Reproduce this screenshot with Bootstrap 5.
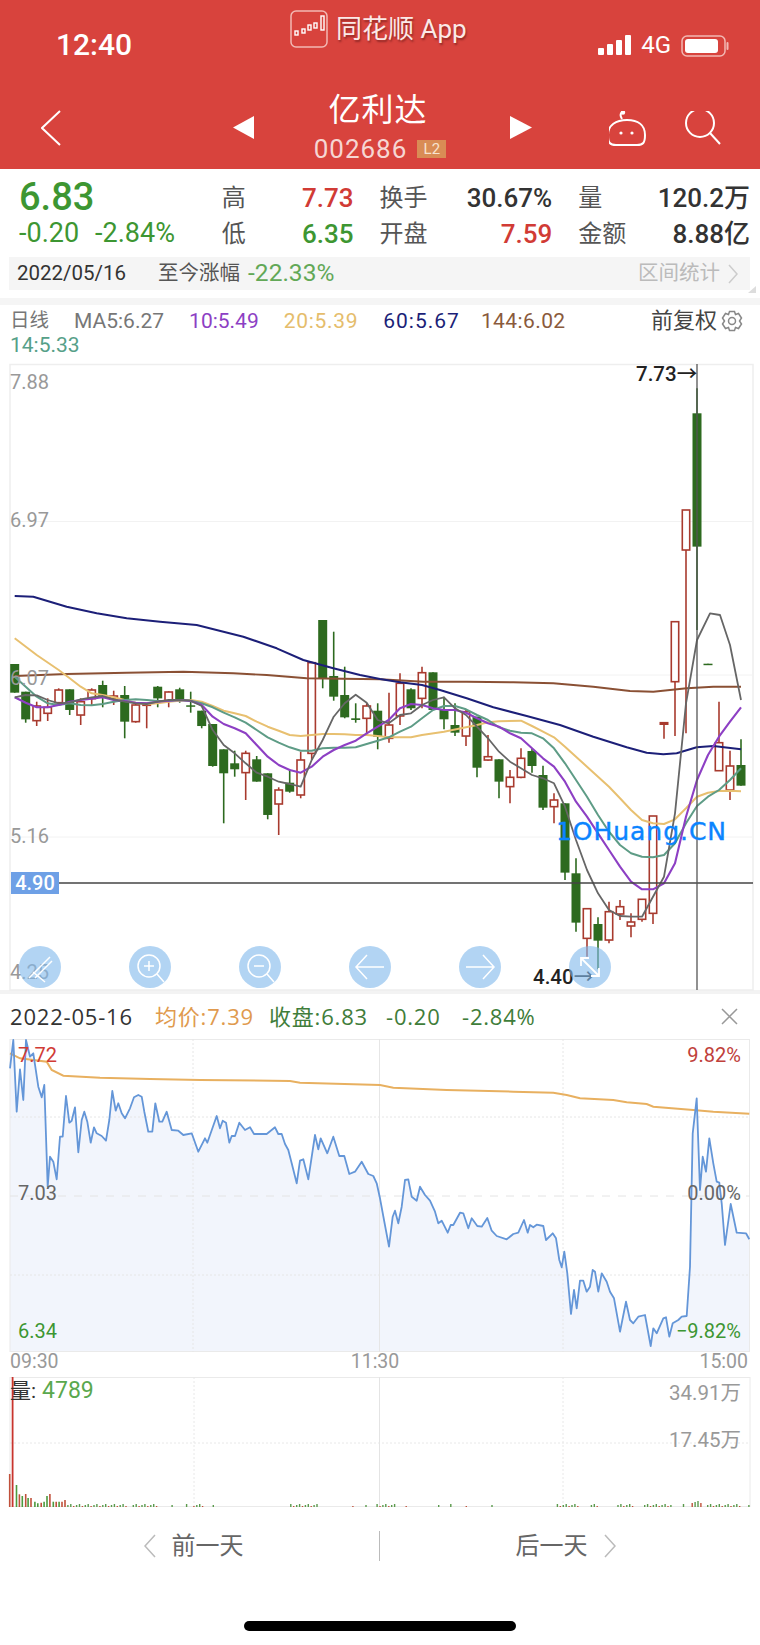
<!DOCTYPE html>
<html lang="zh">
<head>
    <title>亿利达 002686</title>
    <meta name="viewport" content="width=device-width, initial-scale=1.0">
    <link href="https://cdn.jsdelivr.net/npm/bootstrap@5.3.0/dist/css/bootstrap.min.css" rel="stylesheet">
    <style>
        body {
            width: 760px;
            height: 1645px;
            overflow: hidden;
            background: #fff;
            color: #333;
            font-family: Roboto, "Noto Sans CJK SC", sans-serif;
        }
        svg { display: block; }
        #klineSvg { overflow: visible; }
        .hq-top { height: 169px; background: #d8433d; color: #fff; }
        .status-row { height: 70px; padding: 10px 31px 0 56px; }
        .status-time { font-size: 30px; font-weight: 500; width: 234px; padding-top: 20px; line-height: 30px; }
        .status-app { font-size: 26px; line-height: 38px; text-shadow: 1px 2px 2px rgba(90,20,20,.55); color: #fbe9e7; }
        .status-net { margin-left: auto; padding-top: 25px; font-size: 24px; line-height: 20px; gap: 10px; }
        .title-row { height: 99px; padding: 21px 38px 0 41px; }
        .back-ico { margin-top: 19px; }
        .side-ico { margin-top: 20px; }
        .stock-name { font-size: 32px; line-height: 38px; letter-spacing: 1px; margin-bottom: 5px; }
        .stock-code { font-size: 26px; line-height: 30px; color: #f6d6d3; letter-spacing: 1px; }
        .l2-tag { background: #d98c55; color: #f8e3cf; font-size: 15px; line-height: 18px; width: 29px; text-align: center; margin-left: 10px; }
        .title-mid { width: 299px; margin-left: 172px; }
        .info-box { height: 88px; padding: 8px 10px 0 19px; gap: 26px; }
        .info-left { width: 177px; }
        .last-price { font-size: 38px; line-height: 40px; color: #3d9632; font-weight: 500; }
        .last-chg { font-size: 27px; line-height: 32px; color: #3d9632; gap: 16px; white-space: nowrap; }
        .info-cell { font-size: 24px; line-height: 36px; padding-top: 3px; }
        .cell-a { width: 132px; }
        .cell-b { width: 173px; }
        .cell-c { width: 172px; }
        .lab-cn { color: #555; }
        .val-num { font-size: 26px; font-weight: 500; }
        .c-up { color: #d13b35; }
        .c-down { color: #3d9632; }
        .date-bar { position: relative; height: 33px; margin: 0 10px 0 9px; padding: 0 12px 0 8px; background: #f5f5f5; font-size: 20.5px; }
        .date-bar::after { content: ""; position: absolute; right: -6px; bottom: -3px; border-style: solid; border-width: 0 0 7px 8px; border-color: transparent transparent #ddd transparent; }
        .date-up { color: #62a857; font-size: 24.5px; }
        .date-more { color: #bbb; }
        .band-gap { height: 8px; }
        .band-grey { height: 7px; background: #f5f5f5; }
        .band-thin { height: 4px; background: #f3f3f3; }
        .legend-box { height: 59px; padding: 4px 17px 0 10px; font-size: 21px; line-height: 24px; position: relative; }
        .legend-line { gap: 25px; white-space: nowrap; }
        .leg-day { font-size: 19.5px; }
        .leg-fq { font-size: 22px; color: #444; }
        .m-gray { color: #777; }
        .m-pur { color: #8d3fc4; }
        .m-yel { color: #e5bd6c; letter-spacing: .7px; }
        .m-navy { color: #1c1f78; letter-spacing: 1px; }
        .m-brn { color: #8a5a3c; letter-spacing: .4px; margin-left: -4px; }
        .m-teal { color: #56a088; }
        .kline-box { position: relative; height: 626px; }
        .tool-row { position: absolute; left: 19px; top: 582px; gap: 68px; }
        .tool-btn { width: 42px; height: 42px; border-radius: 50%; background: rgba(130,185,235,.62); border: 0; padding: 0; }
        .day-head { height: 45px; padding: 0 22px 0 10px; font-size: 22px; letter-spacing: .8px; white-space: nowrap; display: grid; grid-template-columns: 145px 114px 117px 76px 1fr auto; align-items: center; font-family: "Open Sans", Roboto, "Noto Sans CJK SC", sans-serif; }
        .c-avg { color: #e09a4e; }
        .c-close { color: #3f7d3a; }
        .ax-txt { font-size: 20px; fill: #999; }
        .time-axis { height: 25px; padding: 0 12px 0 10px; font-size: 19.5px; line-height: 19px; color: #999; }
        .nav-box { height: 93px; font-size: 24px; color: #666; padding-top: 0; }
        .nav-half { width: 379px; height: 30px; }
        .nav-sep { width: 1px; height: 30px; background: #bbb; }
        .home-bar { width: 272px; height: 10px; background: #000; border-radius: 5px; margin: 21px auto 0; }
    </style>
</head>
<body>
    <!-- 顶部红色栏 -->
    <div class="hq-top">
        <div class="status-row d-flex">
            <div class="status-time">12:40</div>
            <div class="d-flex gap-2 align-items-start">
                <svg width="38" height="38" viewBox="0 0 38 38">
                    <rect x="1" y="1" width="36" height="36" rx="5" fill="#d8433d" stroke="#f2b8b3" stroke-width="1.5"/>
                    <g fill="none" stroke="#fff" stroke-width="1.4">
                        <rect x="5" y="21" width="3" height="4"/><rect x="12" y="19" width="3" height="4"/>
                        <rect x="18" y="15" width="3" height="5"/><rect x="24" y="13" width="3" height="5"/><rect x="31" y="6" width="3" height="14"/>
                    </g>
                </svg>
                <span class="status-app">同花顺 App</span>
            </div>
            <div class="status-net d-flex">
                <svg width="33" height="20" viewBox="0 0 33 20" fill="#fff">
                    <rect x="0" y="13" width="6" height="7" rx="1"/><rect x="9" y="9" width="6" height="11" rx="1"/>
                    <rect x="18" y="5" width="6" height="15" rx="1"/><rect x="27" y="0" width="6" height="20" rx="1"/>
                </svg>
                <span>4G</span>
                <svg width="48" height="22" viewBox="0 0 48 22">
                    <rect x="1" y="1" width="43" height="20" rx="5" fill="none" stroke="#f2b8b3" stroke-width="1.5"/>
                    <rect x="4" y="4" width="33" height="14" rx="3" fill="#fff"/>
                    <rect x="45.5" y="7" width="2" height="8" rx="1" fill="#f2b8b3"/>
                </svg>
            </div>
        </div>
        <div class="title-row d-flex align-items-start">
            <svg class="back-ico" width="20" height="36" viewBox="0 0 20 36"><polyline points="19,1 1,18 19,35" fill="none" stroke="#fff" stroke-width="2"/></svg>
            <div class="title-mid d-flex justify-content-between align-items-center">
                <svg width="21" height="23" viewBox="0 0 21 23"><polygon points="21,0 21,23 0,11.5" fill="#fff"/></svg>
                <div class="text-center pe-2">
                    <div class="stock-name">亿利达</div>
                    <div class="d-flex align-items-center justify-content-center ms-1">
                        <span class="stock-code">002686</span><span class="l2-tag">L2</span>
                    </div>
                </div>
                <svg width="22" height="23" viewBox="0 0 22 23"><polygon points="0,0 0,23 22,11.5" fill="#fff"/></svg>
            </div>
            <svg class="ms-auto side-ico" width="113" height="38" viewBox="0 0 113 38" fill="none" stroke="#fff" stroke-width="2">
                <g transform="translate(-2,0)">
                    <path d="M15 8 C 13 5 13 3 15 1"/><circle cx="16" cy="1.5" r="1.2" fill="#fff"/>
                    <path d="M1 24 C 1 14 9 9 20 9 C 31 9 38 14 38 24 C 38 32 36 34 30 34 L 9 34 C 3 34 1 32 1 24 Z"/>
                    <circle cx="14" cy="22" r="1.6" fill="#fff" stroke="none"/><circle cx="25" cy="22" r="1.6" fill="#fff" stroke="none"/>
                </g>
                <circle cx="91" cy="12" r="14"/><line x1="101" y1="22" x2="111" y2="33"/>
            </svg>
        </div>
    </div>

    <!-- 行情概要 -->
    <div class="info-box d-flex">
        <div class="info-left">
            <div class="last-price">6.83</div>
            <div class="last-chg d-flex"><span>-0.20</span><span>-2.84%</span></div>
        </div>
        <div class="info-cell cell-a">
            <div class="d-flex justify-content-between"><span class="lab-cn">高</span><span class="val-num c-up">7.73</span></div>
            <div class="d-flex justify-content-between"><span class="lab-cn">低</span><span class="val-num c-down">6.35</span></div>
        </div>
        <div class="info-cell cell-b">
            <div class="d-flex justify-content-between"><span class="lab-cn">换手</span><span class="val-num">30.67%</span></div>
            <div class="d-flex justify-content-between"><span class="lab-cn">开盘</span><span class="val-num c-up">7.59</span></div>
        </div>
        <div class="info-cell cell-c">
            <div class="d-flex justify-content-between"><span class="lab-cn">量</span><span class="val-num">120.2万</span></div>
            <div class="d-flex justify-content-between"><span class="lab-cn">金额</span><span class="val-num">8.88亿</span></div>
        </div>
    </div>
    <div class="date-bar d-flex align-items-center">
        <span>2022/05/16</span>
        <span class="lab-cn ms-4 ps-2">至今涨幅</span>
        <span class="date-up ms-2">-22.33%</span>
        <span class="date-more ms-auto">区间统计</span>
        <svg class="ms-2" width="10" height="20" viewBox="0 0 10 20"><polyline points="1,1 9,10 1,19" fill="none" stroke="#ccc" stroke-width="1.5"/></svg>
    </div>
    <div class="band-gap"></div>
    <div class="band-grey"></div>

    <!-- 均线图例 -->
    <div class="legend-box">
        <div class="legend-line d-flex">
            <span class="m-gray leg-day">日线</span>
            <span class="m-gray">MA5:6.27</span>
            <span class="m-pur">10:5.49</span>
            <span class="m-yel">20:5.39</span>
            <span class="m-navy">60:5.67</span>
            <span class="m-brn">144:6.02</span>
            <span class="leg-fq ms-auto d-flex align-items-center gap-1">前复权
                <svg width="22" height="22" viewBox="0 0 22 22" fill="none" stroke="#888" stroke-width="1.5">
                    <path d="M8.5 1.5 H13.5 L14.5 4.5 L17.5 3.5 L20.5 8 L18.5 11 L20.5 14 L17.5 18.5 L14.5 17.5 L13.5 20.5 H8.5 L7.5 17.5 L4.5 18.5 L1.5 14 L3.5 11 L1.5 8 L4.5 3.5 L7.5 4.5 Z"/>
                    <circle cx="11" cy="11" r="3.5"/>
                </svg>
            </span>
        </div>
        <div class="m-teal">14:5.33</div>
    </div>

    <!-- K线图 -->
    <div class="kline-box">
        <svg id="klineSvg" width="760" height="626" viewBox="0 364 760 626"></svg>
        <div class="tool-row d-flex">
            <button class="tool-btn" type="button" aria-label="收起">
                <svg width="42" height="42" viewBox="0 0 42 42" fill="none" stroke="#fff" stroke-width="1.5"><path d="M10 32 L31 11 M16 32 L33 15 M14 26 L26 36"/></svg>
            </button>
            <button class="tool-btn" type="button" aria-label="放大">
                <svg width="42" height="42" viewBox="0 0 42 42" fill="none" stroke="#fff" stroke-width="1.5"><circle cx="20" cy="20" r="11"/><path d="M28 28 L35 36 M15 20 H25 M20 15 V25"/></svg>
            </button>
            <button class="tool-btn" type="button" aria-label="缩小">
                <svg width="42" height="42" viewBox="0 0 42 42" fill="none" stroke="#fff" stroke-width="1.5"><circle cx="20" cy="20" r="11"/><path d="M28 28 L35 36 M15 20 H25"/></svg>
            </button>
            <button class="tool-btn" type="button" aria-label="左移">
                <svg width="42" height="42" viewBox="0 0 42 42" fill="none" stroke="#fff" stroke-width="1.5"><path d="M7 21 H35 M18 9 L7 21 L18 33"/></svg>
            </button>
            <button class="tool-btn" type="button" aria-label="右移">
                <svg width="42" height="42" viewBox="0 0 42 42" fill="none" stroke="#fff" stroke-width="1.5"><path d="M7 21 H35 M24 9 L35 21 L24 33"/></svg>
            </button>
            <button class="tool-btn" type="button" aria-label="全屏">
                <svg width="42" height="42" viewBox="0 0 42 42" fill="none" stroke="#fff" stroke-width="1.8"><path d="M12 12 L30 30 M12 20 V12 H20 M30 22 V30 H22"/></svg>
            </button>
        </div>
    </div>
    <div class="band-thin"></div>

    <!-- 当日分时 -->
    <div class="day-head">
        <span>2022-05-16</span>
        <span class="c-avg">均价:7.39</span>
        <span class="c-close">收盘:6.83</span>
        <span class="c-close">-0.20</span>
        <span class="c-close">-2.84%</span>
        <svg width="17" height="17" viewBox="0 0 17 17"><path d="M1 1 L16 16 M16 1 L1 16" stroke="#999" stroke-width="1.5"/></svg>
    </div>
    <svg id="minuteSvg" width="760" height="313" viewBox="0 1039 760 313"></svg>
    <div class="time-axis d-flex justify-content-between">
        <span>09:30</span><span class="me-2">11:30</span><span>15:00</span>
    </div>
    <svg id="volumeSvg" width="760" height="130" viewBox="0 1377 760 130"></svg>

    <!-- 前后一天 -->
    <div class="nav-box">
        <div class="d-flex align-items-center pt-4">
            <div class="nav-half d-flex align-items-center justify-content-center gap-3 ps-2">
                <svg width="12" height="24" viewBox="0 0 12 24"><polyline points="11,1 1,12 11,23" fill="none" stroke="#bbb" stroke-width="1.5"/></svg>
                <span>前一天</span>
            </div>
            <div class="nav-sep"></div>
            <div class="nav-half d-flex align-items-center justify-content-center gap-3 pe-2">
                <span>后一天</span>
                <svg width="12" height="24" viewBox="0 0 12 24"><polyline points="1,1 11,12 1,23" fill="none" stroke="#bbb" stroke-width="1.5"/></svg>
            </div>
        </div>
    </div>
    <div class="home-bar"></div>

    <script src="https://cdn.jsdelivr.net/npm/bootstrap@5.3.0/dist/js/bootstrap.bundle.min.js"></script>
    <script>
        // 读图坐标：3 倍放大后的位置，fx/fy 换算回页面坐标
        const fx = x => (x / 3).toFixed(1);
        const fy = y => (620 + y / 3).toFixed(1);
        const poly = (pts, color, w) => `<polyline fill="none" stroke="${color}" stroke-width="${w}" stroke-linejoin="round" points="${pts.map(p => fx(p[0]) + ',' + fy(p[1])).join(' ')}"/>`;
        const shift = arr => arr.map(p => [p[0] + 1140, p[1]]);

        // [x, 实体上, 实体下, 影线上, 影线下, 涨跌]
        const candles = [
            [44,132,218,132,218,'g'],[77,215,298,215,308,'g'],[110,258,302,245,318,'r'],[143,262,280,235,303,'r'],
            [176,210,248,205,250,'r'],[209,208,270,208,285,'g'],[242,245,285,235,315,'r'],[275,210,236,205,255,'r'],
            [308,195,232,182,262,'g'],[341,228,236,212,255,'r'],[374,225,305,198,355,'g'],[407,255,305,250,308,'r'],
            [440,250,256,250,325,'r'],[473,200,235,198,262,'g'],[506,216,242,214,262,'r'],[539,208,242,203,248,'g'],
            [572,256,260,215,278,'g'],[605,272,318,272,325,'g'],[638,312,438,312,440,'g'],[671,388,460,388,610,'g'],
            [704,430,448,392,470,'g'],[737,400,458,392,540,'r'],[770,418,485,408,485,'g'],[803,460,585,460,598,'g'],
            [836,510,552,502,645,'r'],[869,488,515,448,518,'g'],[902,420,525,395,535,'r'],[935,128,400,125,420,'r'],
            [968,0,175,0,205,'g'],[1001,168,230,35,242,'g'],[1034,225,292,140,295,'g'],[1067,295,300,250,308,'g'],
            [1100,258,295,250,345,'r'],[1133,272,350,250,388,'g']
        ];
        const candlesRight = [
            [27,315,355,218,368,'r'],[60,190,288,160,315,'r'],[93,208,265,205,270,'g'],[126,158,235,140,265,'r'],
            [159,157,270,157,270,'g'],[192,268,298,230,328,'g'],[225,315,338,250,348,'g'],[258,275,348,270,378,'r'],
            [291,290,443,290,472,'g'],[324,410,420,345,422,'r'],[357,418,485,418,535,'g'],[390,472,500,450,550,'r'],
            [423,415,472,385,475,'r'],[456,393,438,385,458,'g'],[489,465,563,437,570,'g'],[522,540,560,520,610,'r'],
            [555,550,758,550,780,'g'],[588,760,908,715,935,'g'],[621,866,955,866,1010,'r'],[654,912,962,892,1048,'g'],
            [687,875,960,845,970,'r'],[720,860,882,840,900,'r'],[753,906,918,880,952,'r'],[786,838,898,838,905,'r'],
            [819,588,880,588,912,'r'],[852,308,312,308,356,'r'],[885,5,185,5,348,'r'],[918,-330,-210,-330,340,'r'],
            [951,-620,-220,-695,30,'g'],[984,131,135,131,135,'g'],[1017,368,452,245,452,'r'],[1050,438,510,392,540,'r'],
            [1083,435,497,358,497,'g']
        ].map(c => [c[0] + 1140, ...c.slice(1)]);

        const ma5 = [[44,232],[77,225],[110,226],[143,240],[176,250],[209,248],[242,238],[275,232],[308,228],[341,238],[374,245],[407,250],[440,252],[473,245],[506,240],[539,240],[572,242],[605,258],[638,330],[671,375],[704,400],[737,430],[770,458],[803,470],[836,485],[869,492],[902,500],[935,420],[968,360],[1001,290],[1034,250],[1067,224],[1100,248],[1133,300]]
            .concat(shift([[26,310],[60,285],[93,280],[126,255],[159,240],[192,232],[225,265],[258,285],[291,320],[324,355],[357,395],[390,425],[423,445],[456,465],[489,475],[522,490],[555,560],[588,660],[621,750],[654,820],[687,870],[720,888],[753,890],[786,890],[819,830],[852,770],[885,580],[918,250],[951,60],[990,-20],[1020,-15],[1050,75],[1083,240]]));
        const ma10 = [[44,232],[77,248],[110,262],[143,262],[176,255],[209,245],[242,240],[275,236],[308,232],[341,240],[374,243],[407,248],[440,250],[473,245],[506,242],[539,240],[572,243],[605,255],[638,290],[671,312],[704,325],[737,340],[770,375],[803,410],[836,435],[869,450],[902,458],[935,440],[968,410],[1001,390],[1034,375],[1067,362],[1100,340],[1133,320]]
            .concat(shift([[26,300],[60,265],[93,252],[126,255],[159,265],[192,270],[225,270],[258,278],[291,295],[324,310],[357,320],[390,340],[423,355],[456,385],[489,415],[522,440],[555,485],[588,545],[621,590],[654,640],[687,690],[720,740],[753,785],[786,808],[819,808],[852,790],[885,730],[918,590],[951,480],[984,405],[1017,350],[1050,305],[1083,262]]));
        const ma14 = [[44,170],[77,200],[110,230],[143,250],[176,255],[209,250],[242,255],[275,256],[308,252],[341,245],[374,240],[407,238],[440,240],[473,243],[506,243],[539,240],[572,242],[605,250],[638,262],[671,278],[704,292],[737,308],[770,330],[803,352],[836,368],[869,382],[902,392],[935,392],[968,385],[1001,383],[1034,383],[1067,382],[1100,372],[1133,362]]
            .concat(shift([[26,352],[60,335],[93,320],[126,295],[159,270],[192,258],[225,258],[258,268],[291,285],[324,300],[357,322],[390,332],[423,338],[456,340],[489,355],[522,385],[555,430],[588,480],[621,530],[654,585],[687,635],[720,675],[753,700],[786,710],[819,712],[852,705],[885,670],[918,610],[951,558],[984,530],[1017,510],[1050,480],[1083,445]]));
        const ma20 = [[44,55],[110,105],[176,150],[209,175],[242,200],[275,220],[308,225],[341,232],[374,240],[407,248],[440,253],[473,250],[506,245],[539,242],[572,240],[605,245],[638,258],[671,272],[704,280],[737,288],[770,305],[803,320],[836,332],[869,345],[902,348],[935,345],[968,342],[1001,342],[1034,343],[1067,345],[1100,345],[1133,348]]
            .concat(shift([[26,352],[93,352],[126,345],[192,335],[258,322],[291,315],[324,307],[357,304],[423,302],[456,318],[489,335],[522,352],[555,380],[588,410],[621,440],[654,470],[687,500],[720,535],[753,570],[786,600],[819,610],[852,612],[885,598],[918,565],[951,530],[984,518],[1017,513],[1050,512],[1083,514]]));
        const ma60 = [[44,-72],[100,-70],[200,-40],[290,-20],[380,-5],[480,5],[590,15],[730,50],[830,85],[910,120],[1000,145],[1080,165]]
            .concat(shift([[0,177],[60,187],[126,195],[180,210],[260,235],[340,262],[440,288],[540,315],[640,350],[740,382],[800,398],[850,403],[890,400],[950,382],[1000,378],[1083,388]]));
        const ma144 = [[44,168],[200,162],[380,158],[550,155],[700,160],[800,165],[920,175]]
            .concat(shift([[0,178],[130,185],[260,185],[400,187],[520,190],[640,200],[750,213],[820,215],[920,205],[1000,200],[1083,200]]));

        let k = '';
        k += '<rect x="10" y="364.5" width="743" height="625.5" fill="none" stroke="#eee" stroke-width="1.5"/>';
        [521.5, 675, 837].forEach(y => { k += `<line x1="10" x2="753" y1="${y}" y2="${y}" stroke="#f2f2f2"/>`; });
        candles.concat(candlesRight).forEach(c => {
            const x = +fx(c[0]), col = c[5] === 'r' ? '#a83a2e' : '#2d6a1f';
            k += `<line x1="${x}" x2="${x}" y1="${fy(c[3])}" y2="${fy(c[4])}" stroke="${col}" stroke-width="1.6"/>`;
            const top = +fy(c[1]), h = Math.max((c[2] - c[1]) / 3, 1.5);
            k += c[5] === 'r'
                ? `<rect x="${x - 3.7}" y="${top}" width="7.4" height="${h}" fill="#fff" stroke="${col}" stroke-width="1.6"/>`
                : `<rect x="${x - 4.5}" y="${top}" width="9" height="${h}" fill="${col}"/>`;
        });
        k += poly(ma144, '#8a5034', 1.9) + poly(ma60, '#1c1f78', 2) + poly(ma20, '#e8c070', 2);
        k += poly(ma14, '#5e9c86', 2) + poly(ma10, '#8d3fc4', 2.1) + poly(ma5, '#666', 1.8);
        k += '<line x1="59" x2="753" y1="883" y2="883" stroke="#444" stroke-width="1.3"/><line x1="697" x2="697" y1="364" y2="990" stroke="#555" stroke-width="1.3"/>';
        k += '<rect x="11" y="872" width="48" height="22" fill="#6ea0e6"/><text x="35" y="890" text-anchor="middle" fill="#fff" font-size="20" font-weight="500">4.90</text>';
        [['7.88', 389], ['6.97', 527], ['6.07', 685], ['5.16', 843], ['4.25', 979]].forEach(t => {
            k += `<text class="ax-txt" x="10" y="${t[1]}">${t[0]}</text>`;
        });
        k += '<text x="636" y="381" font-size="20.5" font-weight="500" fill="#222">7.73→</text><text x="533" y="984" font-size="20.5" font-weight="500" fill="#222">4.40→</text>';
        k += '<text x="556" y="840" font-size="25" fill="#0a84ff" stroke="#0a84ff" stroke-width=".4" font-family="DejaVu Sans" textLength="170">1OHuang.CN</text>';
        document.getElementById('klineSvg').innerHTML = k;

        // 分时图：坐标同样取自放大图
        const mx = x => (x / 3).toFixed(1);
        const my = y => (990 + y / 3).toFixed(1);
        const priceLeft = [[30,235],[40,150],[50,365],[60,238],[70,330],[78,150],[90,200],[100,190],[115,290],[125,322],[133,285],[143,590],[150,500],[160,515],[170,568],[180,440],[188,440],[198,318],[208,398],[215,392],[225,352],[235,487],[245,390],[253,365],[262,395],[272,458],[282,412],[290,430],[305,438],[318,452],[328,390],[337,303],[347,362],[355,340],[365,370],[375,385],[390,355],[402,322],[415,315],[425,320],[433,365],[445,425],[457,425],[466,340],[478,395],[487,395],[500,365],[515,420],[535,422],[550,435],[575,430],[595,485],[615,445],[622,458],[650,378],[660,415],[668,392],[678,398],[688,458],[695,438],[705,438],[718,398],[735,420],[750,412],[762,432],[800,432],[825,412],[835,432],[845,432],[855,462],[865,480],[875,520],[890,580],[900,512],[910,508],[925,568],[945,435],[955,478],[962,445],[982,490],[1000,440],[1018,498],[1033,498],[1048,552],[1065,545],[1085,515],[1105,552],[1120,558],[1130,580]];
        const priceRight = [[0,625],[12,690],[27,770],[38,680],[45,662],[55,700],[65,650],[75,570],[85,568],[95,620],[110,632],[120,590],[135,615],[150,632],[165,665],[175,700],[185,692],[203,728],[212,705],[220,705],[240,668],[250,670],[265,715],[275,685],[292,708],[305,710],[322,684],[335,722],[350,738],[380,748],[400,732],[415,728],[432,690],[443,728],[450,705],[460,712],[470,704],[490,708],[498,750],[518,730],[528,745],[538,810],[545,832],[553,785],[562,850],[573,972],[582,900],[590,955],[600,872],[610,872],[620,905],[630,890],[638,840],[645,845],[655,905],[665,850],[680,875],[690,905],[702,925],[720,1025],[738,935],[750,990],[760,1000],[775,980],[795,975],[812,1068],[820,1015],[830,1030],[850,985],[858,982],[868,1040],[878,1000],[895,990],[905,980],[920,978],[930,830],[938,430],[950,325],[960,600],[968,500],[978,545],[988,445],[1000,520],[1010,575],[1018,578],[1025,640],[1035,765],[1052,642],[1070,728],[1098,730],[1108,748]];
        const avgLine = [[30,190],[60,205],[100,210],[140,215],[155,240],[190,257],[300,263],[450,267],[600,270],[870,273],[900,278]]
            .concat(shift([[0,285],[40,293],[200,300],[400,305],[520,308],[560,315],[600,325],[700,330],[740,337],[800,342],[820,350],[940,360],[1000,365],[1108,371]]));
        const pricePts = priceLeft.concat(shift(priceRight)).map(p => mx(p[0]) + ',' + my(p[1])).join(' ');
        const avgPts = avgLine.map(p => mx(p[0]) + ',' + my(p[1])).join(' ');

        let m = '';
        m += `<polygon points="10,1352 ${pricePts} 749,1352" fill="#f2f5fc"/>`;
        m += '<rect x="10" y="1039.5" width="739.5" height="312" fill="none" stroke="#eaeaea"/>';
        [1117, 1275].forEach(y => { m += `<line x1="10" x2="750" y1="${y}" y2="${y}" stroke="#e6e6e6" stroke-dasharray="2 2"/>`; });
        m += '<line x1="10" x2="750" y1="1196" y2="1196" stroke="#e4e4e4" stroke-dasharray="8 8"/>';
        [193, 563].forEach(x => { m += `<line x1="${x}" x2="${x}" y1="1039" y2="1352" stroke="#e6e6e6" stroke-dasharray="2 2"/>`; });
        m += '<line x1="379.5" x2="379.5" y1="1039" y2="1352" stroke="#e6e6e6"/>';
        m += `<polyline points="${avgPts}" fill="none" stroke="#e8b060" stroke-width="2"/>`;
        m += `<polyline points="${pricePts}" fill="none" stroke="#6496d8" stroke-width="1.8" stroke-linejoin="round"/>`;
        m += '<g font-size="20">';
        m += '<text x="18" y="1062" fill="#d13b35">7.72</text><text x="18" y="1200" fill="#666">7.03</text><text x="18" y="1338" fill="#3d9632">6.34</text>';
        m += '<text x="741" y="1062" text-anchor="end" fill="#c0403a">9.82%</text><text x="741" y="1200" text-anchor="end" fill="#666">0.00%</text><text x="741" y="1338" text-anchor="end" fill="#3d9632">−9.82%</text>';
        m += '</g>';
        document.getElementById('minuteSvg').innerHTML = m;

        // 成交量柱
        const vx = x => (x / 2.063).toFixed(1);
        const bigBars = [[20,342,'r'],[34,375,'g'],[40,403,'r'],[46,408,'g'],[53,402,'r'],[58,414,'g'],[64,414,'r'],[72,425,'g'],[78,430,'g'],[85,428,'r'],[91,425,'g'],[97,408,'g'],[103,402,'r'],[110,425,'g'],[116,425,'r'],[122,425,'g'],[128,425,'r'],[134,420,'r']];
        const clusters = [[140,260],[275,325],[355,355],[385,385],[400,420],[440,440],[600,655],[728,728],[755,755],[778,818],[838,838],[905,905],[930,930],[962,962],[1015,1015],[1150,1195],[1220,1232],[1275,1310],[1330,1385],[1410,1410],[1428,1450],[1460,1530],[1545,1545]];
        let v = '<rect x="10" y="1377.5" width="740" height="129" fill="none" stroke="#eaeaea"/>';
        v += '<line x1="10" x2="750" y1="1443" y2="1443" stroke="#e8e8e8" stroke-dasharray="2 2"/>';
        [194, 563].forEach(x => { v += `<line x1="${x}" x2="${x}" y1="1377" y2="1507" stroke="#e8e8e8" stroke-dasharray="2 2"/>`; });
        v += '<line x1="379.5" x2="379.5" y1="1377" y2="1507" stroke="#e4e4e4"/>';
        bigBars.forEach(b => {
            const top = (1360 + b[1] / 3).toFixed(1);
            v += `<line x1="${vx(b[0])}" x2="${vx(b[0])}" y1="${top}" y2="1507" stroke="${b[2] === 'r' ? '#c0503a' : '#4c9a3e'}" stroke-width="1.6"/>`;
        });
        v += `<line x1="${vx(26)}" x2="${vx(26)}" y1="1377" y2="1507" stroke="#c8352e" stroke-width="1.8"/>`;
        let n = 0;
        clusters.forEach(c => {
            for (let x = c[0]; x <= c[1]; x += 6) {
                n++;
                const h = c[0] === 1428 ? 4 + n % 3 : 1 + (n * 7) % 3;
                v += `<line x1="${vx(x)}" x2="${vx(x)}" y1="${1507 - h}" y2="1507" stroke="${n % 3 ? '#5a9a4c' : '#c0503a'}" stroke-width="1.4"/>`;
            }
        });
        v += '<text x="10" y="1398" font-size="21" fill="#333">量:<tspan dx="6" font-size="23" fill="#5aa84e">4789</tspan></text>';
        v += '<g font-size="20.5" fill="#999" text-anchor="end"><text x="741" y="1400">34.91万</text><text x="741" y="1447">17.45万</text></g>';
        document.getElementById('volumeSvg').innerHTML = v;
    </script>
</body>
</html>
